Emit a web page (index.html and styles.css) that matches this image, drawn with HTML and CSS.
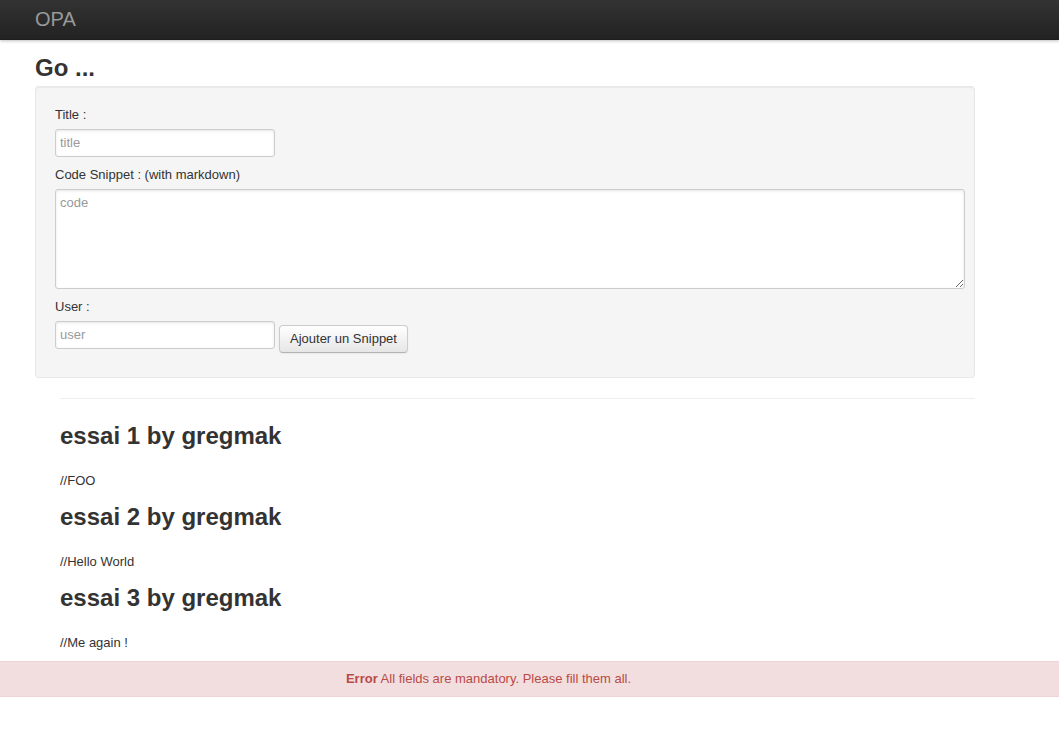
FILE: index.html
```html
<!DOCTYPE html>
<html>
<head>
<meta charset="utf-8">
<title>OPA</title>
<link rel="stylesheet" href="styles.css">
</head>
<body>
<div class="navbar">
  <div class="container">
    <a class="brand">OPA</a>
  </div>
</div>
<div class="container">
  <h2 class="page-title">Go ...</h2>
  <form class="well">
    <label>Title :</label>
    <input class="text" type="text" placeholder="title">
    <label>Code Snippet : (with markdown)</label>
    <textarea class="code" placeholder="code"></textarea>
    <label>User :</label>
    <div class="row">
      <input class="text" type="text" placeholder="user">
      <button type="button" class="btn">Ajouter un Snippet</button>
    </div>
  </form>
  <ul class="snippets">
    <li class="divider"></li>
    <li>
      <h2>essai 1 by gregmak</h2>
      <p>//FOO</p>
    </li>
    <li>
      <h2>essai 2 by gregmak</h2>
      <p>//Hello World</p>
    </li>
    <li>
      <h2>essai 3 by gregmak</h2>
      <p>//Me again !</p>
    </li>
  </ul>
</div>
<div class="alert"><strong>Error</strong> All fields are mandatory. Please fill them all.</div>
</body>
</html>
```
FILE: styles.css
```css
* { box-sizing: content-box; }
html, body { margin: 0; padding: 0; }
body {
  font-family: "Liberation Sans", Arial, Helvetica, sans-serif;
  font-size: 13px;
  line-height: 18px;
  color: #333;
  background: #fff;
}
.navbar {
  height: 40px;
  background: linear-gradient(to bottom, #333333, #222222);
  box-shadow: 0 1px 3px rgba(0,0,0,0.25), inset 0 -1px 0 rgba(0,0,0,0.1);
}
.container {
  width: 940px;
  margin-left: 35px;
}
.brand {
  display: block;
  color: #999;
  font-size: 20px;
  font-weight: 200;
  line-height: 1;
  padding: 9px 0 11px;
}
.page-title {
  margin: 10px 0 0;
  font-size: 24px;
  line-height: 36px;
  font-weight: bold;
  color: #333;
}
.well {
  display: block;
  margin: 0 0 20px;
  background: #f5f5f5;
  border: 1px solid #eee;
  border: 1px solid rgba(0,0,0,0.05);
  border-radius: 4px;
  box-shadow: inset 0 1px 1px rgba(0,0,0,0.05);
  padding: 19px;
}
label {
  display: block;
  margin-bottom: 5px;
  color: #333;
  font-size: 13px;
  line-height: 18px;
}
input.text, textarea.code {
  display: block;
  font-family: "Liberation Sans", Arial, Helvetica, sans-serif;
  font-size: 13px;
  line-height: 18px;
  color: #555;
  border: 1px solid #ccc;
  border-radius: 3px;
  box-shadow: inset 0 1px 3px rgba(0,0,0,0.1);
  padding: 4px;
  margin: 0 0 9px;
  background: #fff;
  outline: none;
}
input.text {
  width: 210px;
  height: 18px;
}
textarea.code {
  width: 900px;
  height: 90px;
  resize: both;
}
::placeholder { color: #999; opacity: 1; }
.row {
  display: flex;
  align-items: flex-start;
  gap: 4px;
}
.btn {
  margin-top: 4px;
  font-family: "Liberation Sans", Arial, Helvetica, sans-serif;
  font-size: 13px;
  line-height: 18px;
  color: #333;
  padding: 4px 10px;
  height: 28px;
  box-sizing: border-box;
  border: 1px solid #ccc;
  border-bottom-color: #b3b3b3;
  border-radius: 4px;
  background: linear-gradient(to bottom, #ffffff, #e6e6e6);
  box-shadow: inset 0 1px 0 rgba(255,255,255,0.2), 0 1px 2px rgba(0,0,0,0.05);
}
.snippets {
  list-style: none;
  margin: 0 0 0 25px;
  padding: 0;
}
.divider {
  height: 0;
  border-top: 1px solid #eee;
  border-bottom: 1px solid #fff;
  margin: 0 0 18px;
}
.snippets h2 {
  margin: 0 0 18px;
  font-size: 24px;
  line-height: 36px;
  font-weight: bold;
  color: #333;
}
.snippets p {
  margin: 0 0 9px;
}
.alert {
  background: #f2dede;
  border-top: 1px solid #eed3d7;
  border-bottom: 1px solid #eed3d7;
  color: #b94a48;
  padding: 8px 96px 8px 14px;
  text-align: center;
  line-height: 18px;
}
```
